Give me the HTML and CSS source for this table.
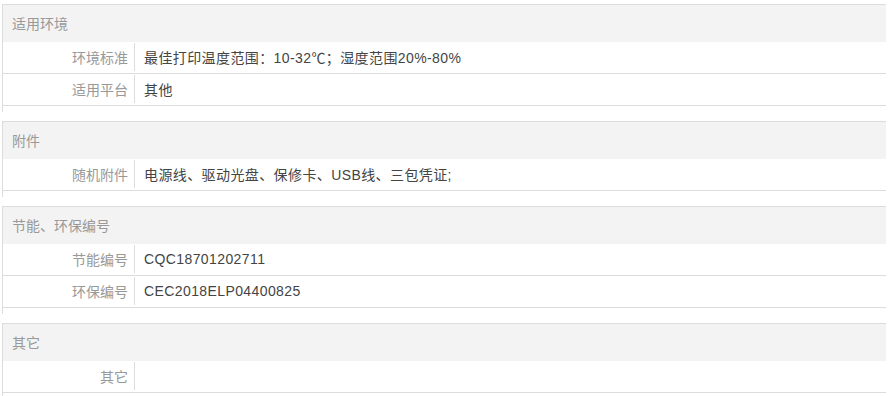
FILE: index.html
```html
<!DOCTYPE html>
<html lang="zh-CN">
<head>
<meta charset="utf-8">
<title>规格参数</title>
<link rel="stylesheet" href="styles.css">
</head>
<body>
<div class="spec">
  <section class="group">
    <h3 class="group-title">适用环境</h3>
    <div class="row"><div class="label">环境标准</div><div class="value">最佳打印温度范围：10-32℃；湿度范围20%-80%</div></div>
    <div class="row"><div class="label">适用平台</div><div class="value">其他</div></div>
  </section>
  <section class="group">
    <h3 class="group-title">附件</h3>
    <div class="row"><div class="label">随机附件</div><div class="value">电源线、驱动光盘、保修卡、USB线、三包凭证;</div></div>
  </section>
  <section class="group">
    <h3 class="group-title">节能、环保编号</h3>
    <div class="row"><div class="label">节能编号</div><div class="value">CQC18701202711</div></div>
    <div class="row"><div class="label">环保编号</div><div class="value">CEC2018ELP04400825</div></div>
  </section>
  <section class="group">
    <h3 class="group-title">其它</h3>
    <div class="row"><div class="label">其它</div><div class="value"></div></div>
  </section>
</div>
</body>
</html>
```
FILE: styles.css
```css
html, body {
  margin: 0;
  padding: 0;
  background: #fff;
}
body {
  font-family: "Liberation Sans", "Noto Sans CJK SC", sans-serif;
  font-size: 14px;
  color: #333;
}
.spec {
  padding: 4px 5px 0 2px;
  display: flex;
  flex-direction: column;
  gap: 9px;
}
.group {
  border-top: 1px solid #dcdcdc;
  border-left: 1px solid #dcdcdc;
  padding-bottom: 6px;
}
.group-title {
  margin: 0;
  height: 37px;
  box-sizing: border-box;
  padding: 0 0 2px 9px;
  display: flex;
  align-items: center;
  background: #f3f3f3;
  font-size: 14px;
  font-weight: normal;
  color: #999;
}
.row {
  display: flex;
  height: 31px;
  border-bottom: 1px solid #dcdcdc;
}
.label {
  width: 125px;
  flex: none;
  margin: 1px 0 2px;
  padding: 0 6px 1px 0;
  border-right: 1px solid #dcdcdc;
  display: flex;
  align-items: center;
  justify-content: flex-end;
  color: #999;
}
.value {
  padding: 0 0 2px 9px;
  display: flex;
  align-items: center;
  color: #444;
  letter-spacing: 0.4px;
}
```
